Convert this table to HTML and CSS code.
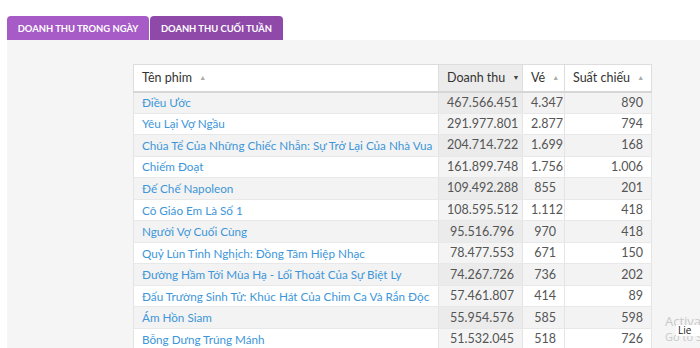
FILE: index.html
```html
<!DOCTYPE html>
<html lang="vi">
<head>
<meta charset="utf-8">
<link rel="stylesheet" href="styles.css">
</head>
<body>
<div class="tabs">
  <div class="tab tab-active">DOANH THU TRONG NGÀY</div>
  <div class="tab tab-other">DOANH THU CUỐI TUẦN</div>
</div>
<div class="panel">
  <table class="grid">
    <thead>
      <tr>
        <th class="c-name">Tên phim <span class="arrow">▲</span></th>
        <th class="c-rev sorted">Doanh thu <span class="arrow dark">▼</span></th>
        <th class="c-tix">Vé <span class="arrow">▲</span></th>
        <th class="c-show">Suất chiếu <span class="arrow">▲</span></th>
      </tr>
    </thead>
    <tbody>
      <tr class="odd"><td class="name">Điều Ước</td><td class="num sorted">467.566.451</td><td class="num">4.347</td><td class="num">890</td></tr>
      <tr><td class="name">Yêu Lại Vợ Ngầu</td><td class="num sorted">291.977.801</td><td class="num">2.877</td><td class="num">794</td></tr>
      <tr class="odd"><td class="name">Chúa Tể Của Những Chiếc Nhẫn: Sự Trở Lại Của Nhà Vua</td><td class="num sorted">204.714.722</td><td class="num">1.699</td><td class="num">168</td></tr>
      <tr><td class="name">Chiếm Đoạt</td><td class="num sorted">161.899.748</td><td class="num">1.756</td><td class="num">1.006</td></tr>
      <tr class="odd"><td class="name">Đế Chế Napoleon</td><td class="num sorted">109.492.288</td><td class="num">855</td><td class="num">201</td></tr>
      <tr><td class="name">Cô Giáo Em Là Số 1</td><td class="num sorted">108.595.512</td><td class="num">1.112</td><td class="num">418</td></tr>
      <tr class="odd"><td class="name">Người Vợ Cuối Cùng</td><td class="num sorted">95.516.796</td><td class="num">970</td><td class="num">418</td></tr>
      <tr><td class="name">Quỷ Lùn Tinh Nghịch: Đồng Tâm Hiệp Nhạc</td><td class="num sorted">78.477.553</td><td class="num">671</td><td class="num">150</td></tr>
      <tr class="odd"><td class="name">Đường Hầm Tới Mùa Hạ - Lối Thoát Của Sự Biệt Ly</td><td class="num sorted">74.267.726</td><td class="num">736</td><td class="num">202</td></tr>
      <tr><td class="name">Đấu Trường Sinh Tử: Khúc Hát Của Chim Ca Và Rắn Độc</td><td class="num sorted">57.461.807</td><td class="num">414</td><td class="num">89</td></tr>
      <tr class="odd"><td class="name">Ám Hồn Siam</td><td class="num sorted">55.954.576</td><td class="num">585</td><td class="num">598</td></tr>
      <tr><td class="name">Bỗng Dưng Trúng Mánh</td><td class="num sorted">51.532.045</td><td class="num">518</td><td class="num">726</td></tr>
    </tbody>
  </table>
</div>
<div class="watermark">
  <div class="wm1">Activa</div>
  <div class="wm2">Go to S</div>
</div>
<div class="tip">Lie</div>
</body>
</html>
```
FILE: styles.css
```css
html, body {
  margin: 0;
  padding: 0;
  background: #ffffff;
  overflow: hidden;
  height: 348px;
}
body {
  font-family: "Lato", "Noto Sans", sans-serif;
  padding: 16px 0 0 7px;
  box-sizing: border-box;
}
.tabs {
  display: flex;
  gap: 1px;
  height: 24px;
}
.tab {
  display: flex;
  align-items: center;
  justify-content: center;
  color: #ffffff;
  font-family: "Lato", sans-serif;
  font-weight: 700;
  font-size: 9.4px;
  border-radius: 4px 4px 0 0;
}
.tab-active {
  width: 142px;
  background: #a65bc6;
}
.tab-other {
  width: 133px;
  background: #8f4aa9;
}
.panel {
  background: #f5f5f5;
  height: 310px;
  padding: 24px 0 0 126px;
  box-sizing: border-box;
}
.grid {
  border-collapse: collapse;
  background: #ffffff;
  font-size: 12.5px;
  table-layout: fixed;
  width: 518px;
}
.grid th {
  height: 27px;
  box-sizing: border-box;
  text-align: left;
  font-weight: 400;
  color: #333333;
  padding: 0 8px;
  border: 1px solid #dddddd;
  border-bottom: 2px solid #d6d6d6;
  background: #ffffff;
  white-space: nowrap;
}
.grid th.sorted {
  background: #ececec;
}
.c-name { width: 305px; }
.c-rev { width: 84px; }
.c-tix { width: 42px; }
.c-show { width: 87px; }
.arrow {
  font-size: 7px;
  color: #aaaaaa;
  vertical-align: 2px;
  margin-left: 4px;
}
.arrow.dark { color: #444444; }
.grid td {
  height: 21.55px;
  box-sizing: border-box;
  padding: 0 8px 1px;
  border: 1px solid #e4e4e4;
  border-top: none;
  border-bottom: 1px solid #e8e8e8;
  white-space: nowrap;
}
.grid tr.odd td { background: #f3f3f3; }
.grid td.sorted { background: #f4f4f4; }
.grid tr.odd td.sorted { background: #ebebeb; }
.grid td.name { color: #3d96d9; font-size: 11.7px; }
.grid td.num { text-align: right; color: #555555; }
.watermark {
  position: absolute;
  left: 665px;
  top: 314px;
  color: #c8c8c8;
  font-family: "Open Sans", sans-serif;
  white-space: nowrap;
}
.wm1 { font-size: 13px; line-height: 15px; }
.wm2 { font-size: 11px; line-height: 16px; }
.tip {
  position: absolute;
  left: 676px;
  top: 325px;
  width: 24px;
  height: 11px;
  box-sizing: border-box;
  background: #ffffff;
  font-family: "Open Sans", sans-serif;
  font-size: 10px;
  line-height: 11px;
  padding-left: 2px;
  color: #222222;
}
```
